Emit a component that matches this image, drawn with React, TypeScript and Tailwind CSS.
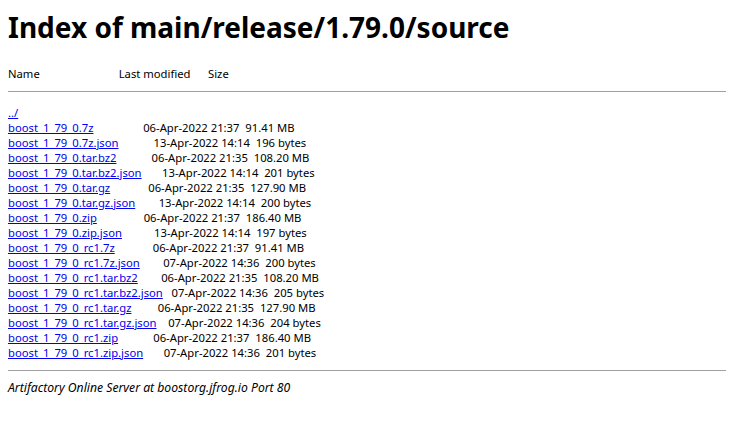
import React from 'react'

const files: [string, string, string][] = [
  ['boost_1_79_0.7z', '06-Apr-2022 21:37', '91.41 MB'],
  ['boost_1_79_0.7z.json', '13-Apr-2022 14:14', '196 bytes'],
  ['boost_1_79_0.tar.bz2', '06-Apr-2022 21:35', '108.20 MB'],
  ['boost_1_79_0.tar.bz2.json', '13-Apr-2022 14:14', '201 bytes'],
  ['boost_1_79_0.tar.gz', '06-Apr-2022 21:35', '127.90 MB'],
  ['boost_1_79_0.tar.gz.json', '13-Apr-2022 14:14', '200 bytes'],
  ['boost_1_79_0.zip', '06-Apr-2022 21:37', '186.40 MB'],
  ['boost_1_79_0.zip.json', '13-Apr-2022 14:14', '197 bytes'],
  ['boost_1_79_0_rc1.7z', '06-Apr-2022 21:37', '91.41 MB'],
  ['boost_1_79_0_rc1.7z.json', '07-Apr-2022 14:36', '200 bytes'],
  ['boost_1_79_0_rc1.tar.bz2', '06-Apr-2022 21:35', '108.20 MB'],
  ['boost_1_79_0_rc1.tar.bz2.json', '07-Apr-2022 14:36', '205 bytes'],
  ['boost_1_79_0_rc1.tar.gz', '06-Apr-2022 21:35', '127.90 MB'],
  ['boost_1_79_0_rc1.tar.gz.json', '07-Apr-2022 14:36', '204 bytes'],
  ['boost_1_79_0_rc1.zip', '06-Apr-2022 21:37', '186.40 MB'],
  ['boost_1_79_0_rc1.zip.json', '07-Apr-2022 14:36', '201 bytes'],
]

const pad = (s: string, n: number) => ' '.repeat(Math.max(1, n - s.length))

export default function App() {
  return (
    <div className="min-h-screen bg-white px-2 text-black" style={{ fontFamily: '"Noto Sans", sans-serif' }}>
      <h1 className="pt-[8px] text-[28px] font-bold leading-[38px]">Index of main/release/1.79.0/source</h1>
      <pre className="mt-[20px] whitespace-pre text-[11.25px] leading-[15px]" style={{ fontFamily: '"Noto Sans", sans-serif' }}>
        {'Name' + pad('Name', 31) + 'Last modified' + pad('Last modified', 19) + 'Size'}
      </pre>
      <hr className="mt-[10px] border-t border-[#a0a0a0]" />
      <pre className="mt-[13px] whitespace-pre text-[11.25px] leading-[15px]" style={{ fontFamily: '"Noto Sans", sans-serif' }}>
        <a href="#" className="text-[#0000ee] underline">../</a>
        {'\n'}
        {files.map(([name, date, size]) => (
          <React.Fragment key={name}>
            <a href="#" className="text-[#0000ee] underline">{name}</a>
            {pad(name, 32) + date + '  ' + size + '\n'}
          </React.Fragment>
        ))}
      </pre>
      <hr className="mt-[10px] border-t border-[#a0a0a0]" />
      <address className="mt-[8px] text-[12.2px] italic leading-[17px]">Artifactory Online Server at boostorg.jfrog.io Port 80</address>
    </div>
  )
}
